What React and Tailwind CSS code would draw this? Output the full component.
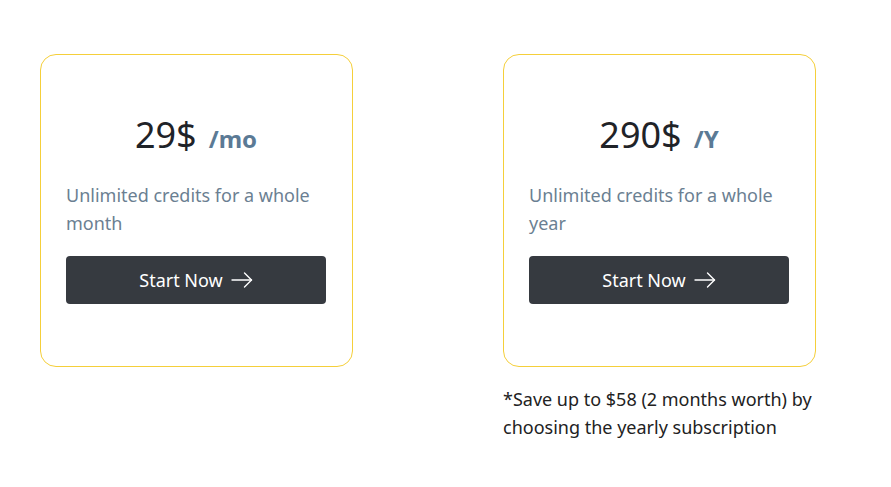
import React from "react";

const plans = [
  { price: "29$", unit: "/mo", desc: "Unlimited credits for a whole month" },
  { price: "290$", unit: "/Y", desc: "Unlimited credits for a whole year" },
];

const Arrow = () => (
  <svg width="22" height="16" viewBox="0 0 22 16" fill="none" stroke="currentColor" strokeWidth="1.4" strokeLinecap="round" strokeLinejoin="round">
    <path d="M1 8H20.5" />
    <path d="M13.5 1L20.5 8L13.5 15" />
  </svg>
);

const PlanCard = ({ plan }) => (
  <div className="w-[313px] h-[313px] rounded-2xl border border-[#f5cf3a] bg-white pl-[25px] pr-[26px] pt-[60px]">
    <div className="flex items-baseline justify-center gap-3 h-10">
      <span className="text-4xl leading-10 text-[#1f2328]">{plan.price}</span>
      <span className="text-2xl font-bold text-[#5b7a95]">{plan.unit}</span>
    </div>
    <p className="mt-[26px] text-lg leading-7 text-[#6b7f92]">{plan.desc}</p>
    <button className="mt-[19px] flex h-12 w-full items-center justify-center gap-2 rounded bg-[#363a40] text-lg text-white">
      Start Now
      <Arrow />
    </button>
  </div>
);

export default function App() {
  return (
    <div
      className="min-h-screen bg-white pl-10 pt-[54px]"
      style={{ fontFamily: '"Noto Sans", "Open Sans", sans-serif' }}
    >
      <div className="flex gap-[150px]">
        <PlanCard plan={plans[0]} />
        <div>
          <PlanCard plan={plans[1]} />
          <p className="mt-[18px] w-[320px] text-lg leading-7 text-[#222]">
            *Save up to $58 (2 months worth) by choosing the yearly subscription
          </p>
        </div>
      </div>
    </div>
  );
}
